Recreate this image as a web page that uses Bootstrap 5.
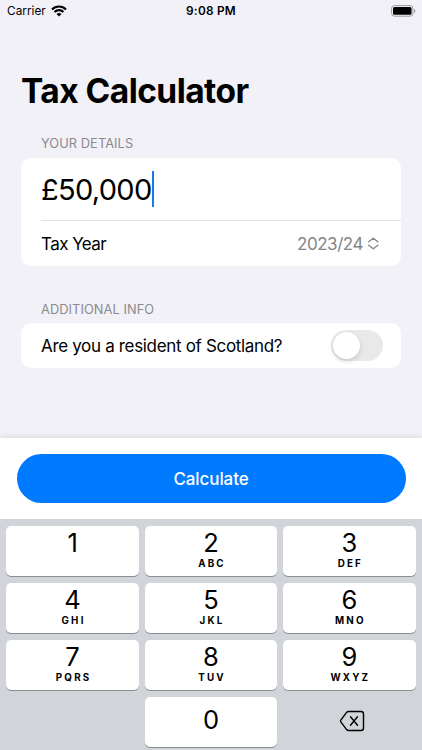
<!DOCTYPE html>
<html lang="en">
<head>
<meta charset="utf-8">
<meta name="viewport" content="width=device-width, initial-scale=1">
<title>Tax Calculator</title>
<link href="https://cdn.jsdelivr.net/npm/bootstrap@5.3.0/dist/css/bootstrap.min.css" rel="stylesheet">
<style>
body{font-family:Inter,"Liberation Sans",sans-serif;background:#f2f1f7;color:#000;width:422px;height:750px;overflow:hidden;line-height:1}
.status-bar{height:22px;padding:0 6px 0 7px}
.carrier{letter-spacing:.02px;font-size:11.8px;padding-top:2px}
.wifi{margin-left:5px}
.clock{font-size:11.8px;font-weight:600;letter-spacing:.25px;white-space:nowrap;padding-top:2px}
.title-main{font-size:33.5px;font-weight:700;letter-spacing:-.55px;margin:52px 0 0 21px;height:34px;line-height:34px;white-space:nowrap}
.section-label{font-size:12.8px;color:#8a8a8f;margin:29px 0 7px 41px;height:14px;line-height:14px;letter-spacing:.08px}
.section-label.info{margin-top:36px;line-height:15px}
.panel{margin:0 21px;background:#fff;border-radius:10px;padding-left:20px}
.amount-row{height:63px;border-bottom:1px solid #e2e2e5}
.amount{font-size:29px;letter-spacing:-.7px}
.caret{width:2px;height:36px;background:#1a78ea}
.form-row{font-size:17px;white-space:nowrap}
.form-row .txt{position:relative;top:1px}
.tax-year{letter-spacing:-.55px}
.question{letter-spacing:-.33px}
.year-row{height:45px;padding-right:21px}
.year{color:#858589;letter-spacing:-.45px}
.scot-row{height:45px;padding-right:18px}
.toggle-track{width:52px;height:31px;border-radius:16px;background:#e9e9ea;padding:2px}
.toggle-knob{width:27px;height:27px;border-radius:50%;background:#fff;box-shadow:0 2px 5px rgba(0,0,0,.15)}
.action-bar{height:81px;margin-top:70px;padding:16px 16.5px;background:#fff;box-shadow:0 0 8px rgba(0,0,0,.12)}
.btn-calc,.btn-calc:hover{height:49px;border-radius:25px;background:#007aff;color:#fff;font-size:17px;font-weight:550;letter-spacing:-.1px;border:0;padding:2px 0 0}
.keypad{display:grid;grid-template-columns:repeat(3,132.4px);grid-auto-rows:50px;align-content:start;column-gap:6px;row-gap:7.1px;padding:6.5px 6.4px 0;height:231px;background:#d1d4d9}
.key{background:#fff;border-radius:5px;box-shadow:0 1px 0 #8b8d91;padding-top:4px}
.digit{font-size:25.5px;line-height:26px;font-weight:380}
.letters{font-size:9.8px;font-weight:700;letter-spacing:2.2px;line-height:10px;margin-top:3px;padding-left:2px}
.zero{padding-top:10px}
.backspace{padding:0 0 2px 6px}
</style>
</head>
<body class="d-flex flex-column">
<header class="status-bar d-flex align-items-center position-relative">
  <span class="carrier">Carrier</span>
  <svg class="wifi" width="16" height="12" viewBox="0 0 16 12"><g fill="none" stroke="#000" stroke-width="2.1"><path d="M1 4.400a10 10 0 0 1 14 0M3.500 7a6.400 6.400 0 0 1 9 0"/></g><path d="M8 11.600 5.500 9.100a3.600 3.600 0 0 1 5 0z"/></svg>
  <span class="clock position-absolute start-50 translate-middle-x">9:08 PM</span>
  <svg class="ms-auto" width="25" height="12" viewBox="0 0 25 12"><rect x=".6" y=".6" width="21.3" height="10.6" rx="2.8" fill="none" stroke="#99999d"/><rect x="2" y="2" width="18.500" height="7.800" rx="1.500"/><path d="M23.100 4v4c1.700-.7 1.700-3.300 0-4z" fill="#99999d"/></svg>
</header>
<main>
  <h1 class="title-main mb-0">Tax Calculator</h1>
  <div class="section-label">YOUR DETAILS</div>
  <section class="panel">
    <div class="amount-row d-flex align-items-center"><span class="amount">£50,000</span><span class="caret"></span></div>
    <div class="form-row year-row d-flex align-items-center justify-content-between">
      <span class="txt tax-year">Tax Year</span>
      <span class="year d-flex align-items-center gap-1"><span class="txt">2023/24</span>
      <svg width="13" height="14" viewBox="0 0 13 14" fill="none" stroke="#858589" stroke-width="1.4" stroke-linecap="round" stroke-linejoin="round"><path d="M1.700 4.700 6.300 1.200 10.900 4.700M1.700 8.300l4.600 3.500 4.600-3.500"/></svg></span>
    </div>
  </section>
  <div class="section-label info">ADDITIONAL INFO</div>
  <section class="panel">
    <div class="form-row scot-row d-flex align-items-center justify-content-between">
      <span class="txt question">Are you a resident of Scotland?</span>
      <span class="toggle-track" role="switch" aria-checked="false"><span class="toggle-knob d-block"></span></span>
    </div>
  </section>
</main>
<div class="action-bar flex-shrink-0"><button class="btn btn-calc w-100">Calculate</button></div>
<div class="keypad text-center flex-shrink-0">
  <div class="key"><div class="digit">1</div></div>
  <div class="key"><div class="digit">2</div><div class="letters">ABC</div></div>
  <div class="key"><div class="digit">3</div><div class="letters">DEF</div></div>
  <div class="key"><div class="digit">4</div><div class="letters">GHI</div></div>
  <div class="key"><div class="digit">5</div><div class="letters">JKL</div></div>
  <div class="key"><div class="digit">6</div><div class="letters">MNO</div></div>
  <div class="key"><div class="digit">7</div><div class="letters">PQRS</div></div>
  <div class="key"><div class="digit">8</div><div class="letters">TUV</div></div>
  <div class="key"><div class="digit">9</div><div class="letters">WXYZ</div></div>
  <div></div>
  <div class="key zero"><div class="digit">0</div></div>
  <div class="backspace d-flex align-items-center justify-content-center"><svg width="26" height="22" viewBox="0 0 26 22" fill="none" stroke="#000" stroke-width="1.4" stroke-linecap="round" stroke-linejoin="round"><path d="M9.500 1.500H22q2.500 0 2.500 2.500v14q0 2.500-2.500 2.500H9.500q-1 0-1.700-.7L2 12.200q-1-1.200 0-2.400L7.800 2.200q.7-.7 1.700-.7zM11.500 6.800l7 8.400M18.500 6.800l-7 8.400"/></svg></div>
</div>
<script src="https://cdn.jsdelivr.net/npm/bootstrap@5.3.0/dist/js/bootstrap.bundle.min.js"></script>
</body>
</html>
